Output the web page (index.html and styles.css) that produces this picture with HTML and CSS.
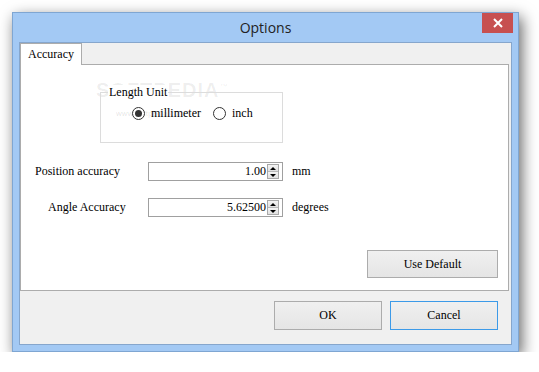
FILE: index.html
```html
<!DOCTYPE html>
<html lang="en">
<head>
    <meta charset="UTF-8">
    <meta name="viewport" content="width=device-width, initial-scale=1.0">
    <title>Options</title>
    <link rel="stylesheet" href="styles.css">
</head>
<body>
    <div class="window">
        <div class="titlebar">
            <span class="title">Options</span>
            <button class="close" aria-label="Close">
                <svg width="10" height="10" viewBox="0 0 10 10">
                    <path d="M1 1 L9 9 M9 1 L1 9" stroke="#fff" stroke-width="2" fill="none"/>
                </svg>
            </button>
        </div>

        <div class="client">
            <div class="tab-strip">
                <div class="tab active">Accuracy</div>
            </div>

            <div class="tab-panel">
                <div class="watermark">SOFTPEDIA<sup>™</sup></div>
                <div class="watermark-url">www.softpedia.com</div>

                <div class="group">
                    <span class="group-title">Length Unit</span>
                    <div class="radio-row">
                        <label class="radio checked"><span class="radio-mark"></span>millimeter</label>
                        <label class="radio"><span class="radio-mark"></span>inch</label>
                    </div>
                </div>

                <div class="field-row position">
                    <span class="field-label">Position accuracy</span>
                    <div class="spin">
                        <span class="spin-value">1.00</span>
                        <div class="spin-buttons">
                            <span class="spin-up"></span>
                            <span class="spin-down"></span>
                        </div>
                    </div>
                    <span class="unit">mm</span>
                </div>

                <div class="field-row angle">
                    <span class="field-label">Angle Accuracy</span>
                    <div class="spin">
                        <span class="spin-value">5.62500</span>
                        <div class="spin-buttons">
                            <span class="spin-up"></span>
                            <span class="spin-down"></span>
                        </div>
                    </div>
                    <span class="unit">degrees</span>
                </div>

                <div class="panel-actions">
                    <button class="btn btn-wide">Use Default</button>
                </div>
            </div>

            <div class="dialog-actions">
                <button class="btn">OK</button>
                <button class="btn btn-focus">Cancel</button>
            </div>
        </div>
    </div>
</body>
</html>
```

FILE: styles.css
```css
body {
    margin: 0;
    background: #fff;
    font-family: "Liberation Serif", "Times New Roman", serif;
    font-size: 12px;
    color: #000;
}

.window {
    margin: 12px 0 0 12px;
    width: 507px;
    height: 340px;
    box-sizing: border-box;
    background: #a3c9f4;
    border: 1px solid #7fa6d2;
    padding: 0 6px 6px 6px;
    box-shadow: 3px 5px 14px rgba(0, 0, 0, 0.6);
    display: flex;
    flex-direction: column;
}

.titlebar {
    height: 29px;
    display: grid;
    grid-template-columns: 1fr auto 1fr;
    align-items: start;
}

.title {
    grid-column: 2;
    font-family: "Open Sans", "Noto Sans", sans-serif;
    font-size: 14px;
    line-height: 29px;
    color: #222;
}

.close {
    grid-column: 3;
    justify-self: end;
    width: 31px;
    height: 20px;
    margin-right: -1px;
    padding: 0;
    border: 0;
    background: #c75050;
    display: grid;
    place-items: center;
}

.client {
    flex: 1;
    background: #f0f0f0;
    border: 1px solid #86a6cc;
    display: flex;
    flex-direction: column;
}

.tab-strip {
    display: flex;
    height: 21px;
}

.tab {
    height: 22px;
    box-sizing: border-box;
    padding: 0 7px;
    line-height: 21px;
    background: #fff;
    border: 1px solid #acacac;
    border-bottom: 0;
    position: relative;
    z-index: 1;
}

.tab-panel {
    position: relative;
    height: 227px;
    box-sizing: border-box;
    margin-right: 2px;
    background: #fff;
    border: 1px solid #acacac;
}

.watermark {
    position: absolute;
    left: 75px;
    top: 14px;
    font-family: "Liberation Sans", Arial, sans-serif;
    font-weight: bold;
    font-size: 20px;
    letter-spacing: 1px;
    color: rgba(0, 0, 0, 0.07);
    pointer-events: none;
}

.watermark sup {
    font-size: 8px;
    font-weight: normal;
}

.watermark-url {
    position: absolute;
    left: 95px;
    top: 44px;
    font-family: "Liberation Sans", Arial, sans-serif;
    font-size: 8px;
    color: rgba(0, 0, 0, 0.12);
    pointer-events: none;
}

.group {
    position: relative;
    margin: 27px 0 0 79px;
    width: 183px;
    height: 51px;
    box-sizing: border-box;
    border: 1px solid #dcdcdc;
}

.group-title {
    position: absolute;
    top: -8px;
    left: 7px;
    padding: 0 1px;
    line-height: 14px;
    background: #fff;
}

.radio-row {
    display: flex;
    align-items: center;
    height: 14px;
    padding: 13px 0 0 31px;
}

.radio {
    display: flex;
    align-items: center;
    gap: 6px;
    margin-right: 12px;
}

.radio-mark {
    width: 13px;
    height: 13px;
    box-sizing: border-box;
    border: 1px solid #333;
    border-radius: 50%;
    background: #fff;
    display: grid;
    place-items: center;
}

.radio.checked .radio-mark::after {
    content: "";
    width: 7px;
    height: 7px;
    border-radius: 50%;
    background: #333;
}

.field-row {
    display: flex;
    align-items: center;
    height: 19px;
}

.field-row.position {
    margin-top: 19px;
}

.field-row.angle {
    margin-top: 17px;
}

.field-label {
    width: 127px;
    box-sizing: border-box;
    padding-left: 14px;
}

.field-row.angle .field-label {
    padding-left: 27px;
}

.spin {
    width: 135px;
    height: 19px;
    box-sizing: border-box;
    border: 1px solid #a0a0a0;
    padding: 1px 3px 1px 0;
    display: flex;
    align-items: center;
    background: #fff;
}

.spin-value {
    flex: 1;
    text-align: right;
    padding-right: 1px;
}

.spin-buttons {
    width: 12px;
    height: 15px;
    box-sizing: border-box;
    border: 1px solid #a8a8a8;
    display: flex;
    flex-direction: column;
}

.spin-up, .spin-down {
    flex: 1;
    display: grid;
    place-items: center;
    background: linear-gradient(#f4f4f4, #e0e0e0);
}

.spin-up {
    border-bottom: 1px solid #b8b8b8;
}

.spin-up::after, .spin-down::after {
    content: "";
    border-left: 3px solid transparent;
    border-right: 3px solid transparent;
}

.spin-up::after {
    border-bottom: 3px solid #000;
}

.spin-down::after {
    border-top: 3px solid #000;
}

.unit {
    margin-left: 9px;
}

.panel-actions {
    display: flex;
    justify-content: flex-end;
    margin: 33px 10px 0 0;
}

.btn {
    width: 108px;
    height: 29px;
    padding: 0;
    font-family: "Liberation Serif", "Times New Roman", serif;
    font-size: 12px;
    color: #000;
    background: linear-gradient(#f0f0f0, #e5e5e5);
    border: 1px solid #acacac;
}

.btn-wide {
    width: 131px;
    height: 28px;
}

.btn-focus {
    border-color: #3c9ae8;
}

.dialog-actions {
    display: flex;
    justify-content: flex-end;
    gap: 8px;
    margin-top: 10px;
    padding-right: 13px;
}
```
